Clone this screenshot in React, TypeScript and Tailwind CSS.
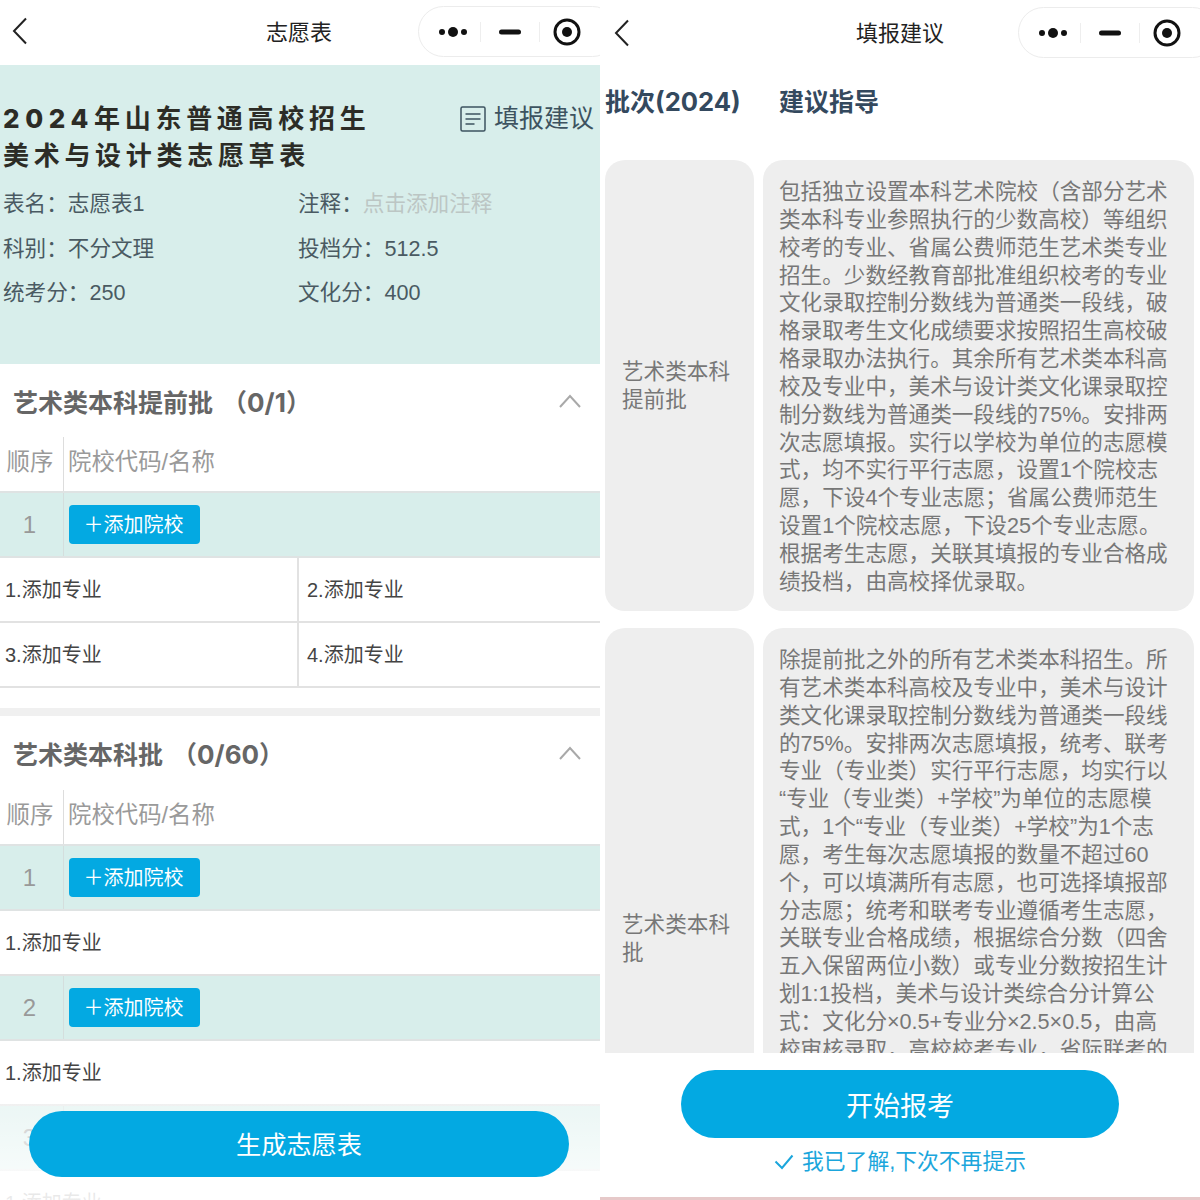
import React from 'react';

const FONT = 'font-["Liberation_Sans","Noto_Sans_CJK_SC",sans-serif]';

const Capsule: React.FC<{ low?: boolean }> = ({ low }) => (
  <div className={`absolute left-[418px] flex h-[51px] w-[200px] items-center rounded-full border border-[#ececec] bg-white ${low ? 'top-[7px]' : 'top-[6px]'}`}>
    <svg width="61" height="20" viewBox="0 0 61 20">
      <circle cx="23" cy="10" r="3" fill="#111" />
      <circle cx="34" cy="10" r="5" fill="#111" />
      <circle cx="45" cy="10" r="3" fill="#111" />
    </svg>
    <div className="h-[20px] w-px bg-[#eeeeee]" />
    <svg width="58" height="20" viewBox="0 0 58 20">
      <rect x="18" y="7.5" width="22" height="5" rx="2.5" fill="#111" />
    </svg>
    <div className="h-[20px] w-px bg-[#eeeeee]" />
    <svg width="56" height="30" viewBox="0 0 56 30">
      <circle cx="27" cy="15" r="12" fill="none" stroke="#111" strokeWidth="3" />
      <circle cx="27" cy="15" r="5" fill="#111" />
    </svg>
  </div>
);

const Header: React.FC<{ title: string; low?: boolean }> = ({ title, low }) => (
  <div className={`relative flex h-[65px] items-center justify-center bg-white text-[22px] text-[#222] ${low ? 'pt-[2px]' : 'pr-[2px]'}`}>
    <svg width="16" height="28" viewBox="0 0 16 28" className={`absolute ${low ? 'left-[14px] top-[19px]' : 'left-[12px] top-[17px]'}`}>
      <path d="M14 1.5 2 14l12 12.5" fill="none" stroke="#222" strokeWidth="2" />
    </svg>
    {title}
    <Capsule low={low} />
  </div>
);

const Chevron: React.FC = () => (
  <svg width="22" height="14" viewBox="0 0 22 14" className="-mt-[4px]">
    <path d="M1 13 11 2l10 11" fill="none" stroke="#a9a9a9" strokeWidth="2" />
  </svg>
);

const SectionTitle: React.FC<{ name: string; count: string; tall?: boolean }> = ({ name, count, tall }) => (
  <div className={`flex items-center justify-between pl-[13px] pr-[19px] pt-[4px] text-[25px] font-bold text-[#666] ${tall ? 'h-[74px]' : 'h-[73px]'}`}>
    <span>
      {name}
      <span className="ml-[9px]">（<span className='font-["Inter",sans-serif] text-[26px]'>{count}</span>）</span>
    </span>
    <Chevron />
  </div>
);

const TableHead: React.FC = () => (
  <div className="flex h-[56px] items-center border-b-2 border-[#dfe3e3] text-[23.4px] text-[#9a9a9a]">
    <div className="flex h-full w-[64px] items-center justify-center border-r border-[#dddddd] pb-[2px] pr-[3px]">顺序</div>
    <div className="pb-[2px] pl-[4px]">院校代码/名称</div>
  </div>
);

const SchoolRow: React.FC<{ n: number }> = ({ n }) => (
  <div className="flex h-[65px] items-center border-b-2 border-[#dfe3e3] bg-[#d8eeeb]">
    <div className="flex h-full w-[64px] items-center justify-center border-r border-[#d4dedd] pr-[4px] text-[24px] text-[#999]">{n}</div>
    <div className="ml-[5px] flex h-[39px] w-[131px] items-center justify-center rounded-[4px] bg-[#03a9e2] pr-[2px] pt-[1px] text-[20px] text-white">
      ＋添加院校
    </div>
  </div>
);

const MajorRow: React.FC<{ items: string[] }> = ({ items }) => (
  <div className="flex h-[65px] border-b-2 border-[#e2e2e2] bg-white text-[20px] text-[#444]">
    {items.map((t, i) => (
      <div key={t} className={i === 1 ? 'flex w-[303px] items-center border-l-2 border-[#e2e2e2] pl-[8px]' : 'flex flex-1 items-center pl-[5px]'}>
        {t}
      </div>
    ))}
  </div>
);

const Field: React.FC<{ label: string; value: string; muted?: boolean }> = ({ label, value, muted }) => (
  <div className="flex h-[44.5px] items-center whitespace-nowrap">
    <span>{label}</span>
    <span className={muted ? 'text-[#bcc6c4]' : ''}>{value}</span>
  </div>
);

const first = [
  '包括独立设置本科艺术院校（含部分艺术',
  '类本科专业参照执行的少数高校）等组织',
  '校考的专业、省属公费师范生艺术类专业',
  '招生。少数经教育部批准组织校考的专业',
  '文化录取控制分数线为普通类一段线，破',
  '格录取考生文化成绩要求按照招生高校破',
  '格录取办法执行。其余所有艺术类本科高',
  '校及专业中，美术与设计类文化课录取控',
  '制分数线为普通类一段线的75%。安排两',
  '次志愿填报。实行以学校为单位的志愿模',
  '式，均不实行平行志愿，设置1个院校志',
  '愿，下设4个专业志愿；省属公费师范生',
  '设置1个院校志愿，下设25个专业志愿。',
  '根据考生志愿，关联其填报的专业合格成',
  '绩投档，由高校择优录取。',
];

const second = [
  '除提前批之外的所有艺术类本科招生。所',
  '有艺术类本科高校及专业中，美术与设计',
  '类文化课录取控制分数线为普通类一段线',
  '的75%。安排两次志愿填报，统考、联考',
  '专业（专业类）实行平行志愿，均实行以',
  '“专业（专业类）+学校”为单位的志愿模',
  '式，1个“专业（专业类）+学校”为1个志',
  '愿，考生每次志愿填报的数量不超过60',
  '个，可以填满所有志愿，也可选择填报部',
  '分志愿；统考和联考专业遵循考生志愿，',
  '关联专业合格成绩，根据综合分数（四舍',
  '五入保留两位小数）或专业分数按招生计',
  '划1:1投档，美术与设计类综合分计算公',
  '式：文化分×0.5+专业分×2.5×0.5，由高',
  '校审核录取，高校校考专业，省际联考的',
];

const GuideRow: React.FC<{ batch: string[]; lines: string[]; height: string }> = ({ batch, lines, height }) => (
  <div className={`flex shrink-0 gap-[9px] ${height}`}>
    <div className="flex w-[149px] flex-col justify-center rounded-[20px] bg-[#eeeeee] pl-[17px] pt-[1px] text-[21.6px] leading-[28px] text-[#777]">
      {batch.map((b) => (
        <div key={b}>{b}</div>
      ))}
    </div>
    <div className="flex-1 rounded-[20px] bg-[#eeeeee] px-[16px] pt-[18px] text-[21.6px] leading-[27.85px] text-[#777]">
      {lines.map((l) => (
        <div key={l} className="whitespace-nowrap">{l}</div>
      ))}
    </div>
  </div>
);

const App: React.FC = () => {
  return (
    <div className={`flex h-[1200px] w-[1200px] overflow-hidden bg-white ${FONT}`}>
      <div className="relative h-[1200px] w-[600px] overflow-hidden">
        <Header title="志愿表" />
        <div className="h-[299px] bg-[#d8eeeb] pl-[3px] pt-[35px]">
          <div className="flex items-start justify-between pr-[6px]">
            <div className="text-[26px] font-bold leading-[37px] tracking-[4.7px] text-[#2c2c26]">
              <div>
                <span className='font-["Inter",sans-serif] font-extrabold tracking-[5.6px]'>2024</span>年山东普通高校招生
              </div>
              <div>美术与设计类志愿草表</div>
            </div>
            <div className="flex items-center gap-[8px] text-[25px] leading-[37px] text-[#3d5360]">
              <svg width="26" height="26" viewBox="0 0 26 26">
                <rect x="1" y="1" width="24" height="24" rx="1.5" fill="none" stroke="#3d5360" strokeWidth="1.5" />
                <path d="M5.5 8h15M5.5 13h15M5.5 18h9" stroke="#3d5360" strokeWidth="1.5" />
              </svg>
              填报建议
            </div>
          </div>
          <div className="mt-[7px] grid grid-cols-[295px_1fr] text-[21.6px] text-[#4a5a62]">
            <Field label="表名：" value="志愿表1" />
            <Field label="注释：" value="点击添加注释" muted />
            <Field label="科别：" value="不分文理" />
            <Field label="投档分：" value="512.5" />
            <Field label="统考分：" value="250" />
            <Field label="文化分：" value="400" />
          </div>
        </div>
        <SectionTitle name="艺术类本科提前批" count="0/1" />
        <TableHead />
        <SchoolRow n={1} />
        <MajorRow items={['1.添加专业', '2.添加专业']} />
        <MajorRow items={['3.添加专业', '4.添加专业']} />
        <div className="h-[20px]" />
        <div className="h-[8px] bg-[#f0f0f0]" />
        <SectionTitle name="艺术类本科批" count="0/60" tall />
        <TableHead />
        <SchoolRow n={1} />
        <MajorRow items={['1.添加专业']} />
        <SchoolRow n={2} />
        <MajorRow items={['1.添加专业']} />
        <SchoolRow n={3} />
        <MajorRow items={['1.添加专业']} />
        {/* 底部按钮浮层 */}
        <div className="absolute bottom-0 left-0 h-[96px] w-full bg-gradient-to-b from-white/50 to-white/90" />
        <div className="absolute left-[29px] top-[1111px] flex h-[66px] w-[540px] items-center justify-center rounded-full bg-[#03a9e2] pt-[3px] text-[25.2px] text-white">
          生成志愿表
        </div>
      </div>

      <div className="flex h-[1200px] w-[600px] flex-col overflow-hidden">
        <div className="relative h-[65px] shrink-0">
          <Header title="填报建议" low />
        </div>
        <div className="flex h-[95px] shrink-0 items-start pl-[5px] pt-[21px] text-[25px] font-bold leading-[32px] text-[#34495e]">
          <div className="w-[174px]">
            批次<span className='font-["Inter",sans-serif] text-[25.6px]'>(2024)</span>
          </div>
          <div>建议指导</div>
        </div>
        <div className="flex min-h-0 flex-1 flex-col gap-[17px] overflow-hidden pl-[5px] pr-[6px]">
          <GuideRow batch={['艺术类本科', '提前批']} lines={first} height="h-[451px]" />
          <GuideRow batch={['艺术类本科', '批']} lines={second} height="h-[620px]" />
        </div>
        <div className="flex h-[144px] shrink-0 flex-col items-center bg-white pt-[17px]">
          <div className="flex h-[68px] w-[438px] items-center justify-center rounded-full bg-[#03a9e2] pt-[6px] text-[27px] text-white">
            开始报考
          </div>
          <div className="mt-[8px] flex items-center gap-[8px] text-[21.8px] text-[#1ba6dc]">
            <svg width="20" height="16" viewBox="0 0 20 16">
              <path d="M1.5 7.5 8 14 18.5 1.5" fill="none" stroke="#1ba6dc" strokeWidth="2" />
            </svg>
            我已了解,下次不再提示
          </div>
        </div>
        <div className="h-[3px] shrink-0 bg-[#e6c9c9]" />
      </div>
    </div>
  );
};

export default App;
